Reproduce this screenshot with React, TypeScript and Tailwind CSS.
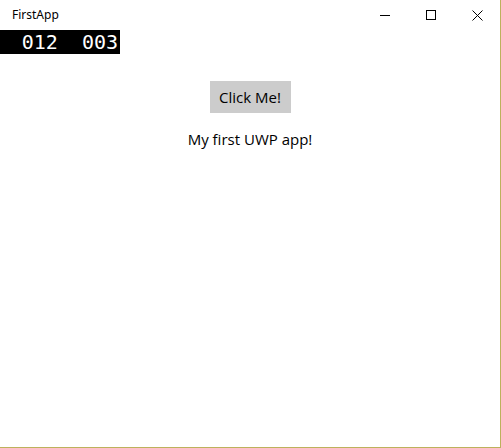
import React from "react";

export default function App() {
  return (
    <div className="relative w-[501px] h-[448px] bg-white border-r border-b border-[#bdb15c] overflow-hidden" style={{ fontFamily: '"Open Sans", "Noto Sans", sans-serif' }}>
      <div className="flex h-[30px] items-center">
        <div className="pl-[12px] text-[12px] text-black" style={{ fontFamily: '"Noto Sans", sans-serif' }}>FirstApp</div>
        <div className="ml-auto flex h-full">
          <div className="w-[46px] flex items-center justify-center">
            <svg width="10" height="10" viewBox="0 0 10 10"><line x1="0" y1="5.5" x2="10" y2="5.5" stroke="black" strokeWidth="1" /></svg>
          </div>
          <div className="w-[46px] flex items-center justify-center">
            <svg width="10" height="10" viewBox="0 0 10 10"><rect x="0.5" y="0.5" width="9" height="9" fill="none" stroke="black" strokeWidth="1" /></svg>
          </div>
          <div className="w-[46px] flex items-center justify-center">
            <svg width="11" height="11" viewBox="0 0 11 11"><path d="M0.5 0.5 L10.5 10.5 M10.5 0.5 L0.5 10.5" stroke="black" strokeWidth="1" /></svg>
          </div>
        </div>
      </div>
      <div className="absolute left-0 top-[30px] w-[120px] h-[24px] bg-black flex items-center justify-end pr-[2px] gap-[24px] text-white text-[20px] leading-none" style={{ fontFamily: '"DejaVu Sans Mono", monospace' }}>
        <span>012</span>
        <span>003</span>
      </div>
      <div className="flex flex-col items-center pt-[51px]">
        <div className="w-[81px] h-[32px] bg-[#cccccc] flex items-center justify-center text-[15px] text-black">Click Me!</div>
        <div className="mt-[15px] text-[15px] text-black">My first UWP app!</div>
      </div>
    </div>
  );
}
